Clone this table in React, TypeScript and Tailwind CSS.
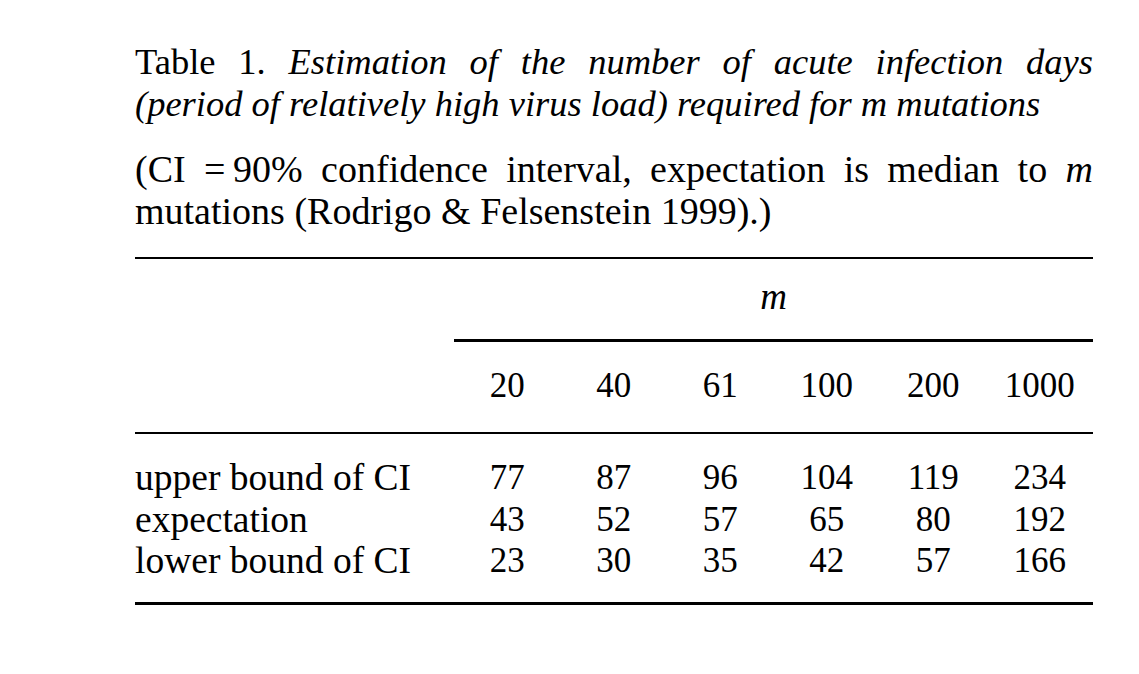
import React from "react";

const cols = ["20", "40", "61", "100", "200", "1000"];
const rows: { label: string; vals: string[] }[] = [
  { label: "upper bound of CI", vals: ["77", "87", "96", "104", "119", "234"] },
  { label: "expectation", vals: ["43", "52", "57", "65", "80", "192"] },
  { label: "lower bound of CI", vals: ["23", "30", "35", "42", "57", "166"] },
];

export default function App() {
  return (
    <div className="w-[1139px] h-[674px] bg-white text-black overflow-hidden font-['Liberation_Serif','Times_New_Roman',serif]">
      <div className="pl-[135px] pr-[46px] pt-[41px]">
        {/* Caption */}
        <div className="text-[36.5px] leading-[42px]">
          <div className="text-justify [text-align-last:justify]">
            Table 1. <i>Estimation of the number of acute infection days</i>
          </div>
          <div>
            <i>(period of relatively high virus load) required for m mutations</i>
          </div>
        </div>
        <div className="mt-[23px] text-[38px] leading-[42px]">
          <div className="text-justify [text-align-last:justify]">
            (CI ={"\u2009"}90% confidence interval, expectation is median to <i>m</i>
          </div>
          <div>mutations (Rodrigo &amp; Felsenstein 1999).)</div>
        </div>

        {/* Table */}
        <div className="mt-[25px] border-t-2 border-black">
          <div className="flex pt-[17px]">
            <div className="w-[319px] shrink-0" />
            <div className="flex-1 flex flex-col">
              <div className="text-center text-[37px] leading-[42px] italic">m</div>
              <div className="mt-[21px] border-t-[3px] border-black" />
              <div className="flex pt-[23px] pb-[25px] text-[35px] leading-[42px]">
                {cols.map((c) => (
                  <div key={c} className="flex-1 text-center">
                    {c}
                  </div>
                ))}
              </div>
            </div>
          </div>
          <div className="border-t-2 border-black pt-[23px] pb-[20px]">
            {rows.map((r) => (
              <div key={r.label} className="flex h-[41.5px] items-center leading-[41.5px]">
                <div className="w-[319px] shrink-0 text-[37.5px] whitespace-nowrap">{r.label}</div>
                <div className="flex-1 flex text-[35px]">
                  {r.vals.map((v, i) => (
                    <div key={i} className="flex-1 text-center">
                      {v}
                    </div>
                  ))}
                </div>
              </div>
            ))}
          </div>
          <div className="border-t-[3px] border-black" />
        </div>
      </div>
    </div>
  );
}
